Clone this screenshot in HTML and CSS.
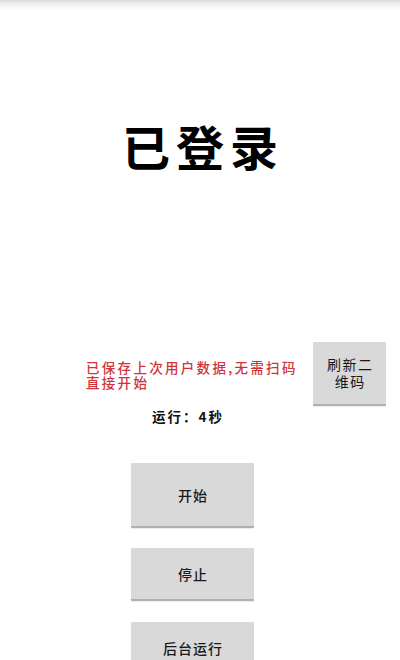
FILE: index.html
```html
<!DOCTYPE html>
<html lang="zh-CN">
<head>
<meta charset="utf-8">
<title>已登录</title>
<link rel="stylesheet" href="styles.css">
</head>
<body>
<div class="page">
  <div class="shade"></div>
  <h1 class="title">已登录</h1>
  <div class="info-row">
    <p class="notice"><span class="line">已保存上次用户数据,无需扫码</span><span class="line">直接开始</span></p>
    <button class="btn btn-refresh"><span class="line">刷新二</span><span class="line">维码</span></button>
  </div>
  <p class="runtime">运行：4秒</p>
  <div class="actions">
    <button class="btn btn-main btn-start">开始</button>
    <button class="btn btn-main btn-stop">停止</button>
    <button class="btn btn-main btn-bg">后台运行</button>
  </div>
</div>
</body>
</html>
```

FILE: styles.css
```css
html, body {
  margin: 0;
  padding: 0;
  background: #ffffff;
}

body {
  font-family: "Noto Sans CJK SC", "Noto Sans", sans-serif;
  color: #111111;
}

.page {
  width: 400px;
  height: 660px;
  overflow: hidden;
  display: flex;
  flex-direction: column;
}

.shade {
  height: 11px;
  flex: none;
  background: linear-gradient(to bottom, #dcdcdc 0%, #efefef 35%, #fafafa 75%, #ffffff 100%);
}

.title {
  margin: 109px 0 0 0;
  height: 50px;
  line-height: 50px;
  font-size: 48px;
  font-weight: 700;
  letter-spacing: 6px;
  text-indent: 6px;
  text-align: center;
  color: #000000;
}

.info-row {
  margin-top: 172px;
  display: flex;
  align-items: center;
  padding-left: 86px;
}

.notice {
  margin: 0;
  width: 227px;
  font-size: 13.5px;
  font-weight: 500;
  letter-spacing: 2.3px;
  color: #cf3438;
  padding-top: 1px;
  display: flex;
  flex-direction: column;
}

.notice .line {
  display: block;
  height: 15px;
  line-height: 15px;
  white-space: nowrap;
}

.btn {
  font-family: "Noto Sans CJK SC", "Noto Sans", sans-serif;
  background: #d9d9d9;
  border: none;
  border-bottom: 2px solid #b0b0b0;
  border-radius: 1px;
  box-shadow: 0 1px 1px rgba(0, 0, 0, 0.08);
  color: #1a1a1a;
  padding: 0;
  margin: 0;
  display: flex;
  align-items: center;
  justify-content: center;
  text-align: center;
}

.btn-refresh {
  width: 73px;
  height: 64px;
  flex-direction: column;
  font-size: 14px;
  letter-spacing: 1.5px;
  padding-left: 1.5px;
}

.btn-refresh .line {
  display: block;
  height: 17px;
  line-height: 17px;
}

.runtime {
  margin: 0;
  padding-left: 152px;
  height: 20px;
  line-height: 20px;
  font-size: 13.5px;
  font-weight: 700;
  letter-spacing: 2px;
  color: #111111;
}

.actions {
  margin-top: 37px;
  padding-left: 131px;
  display: flex;
  flex-direction: column;
  align-items: flex-start;
}

.btn-main {
  width: 123px;
  font-size: 14px;
  font-weight: 500;
  letter-spacing: 1px;
  padding-left: 1px;
}

.btn-start {
  height: 65px;
}

.btn-stop {
  margin-top: 20px;
  height: 53px;
}

.btn-bg {
  margin-top: 21px;
  height: 54px;
}
```
